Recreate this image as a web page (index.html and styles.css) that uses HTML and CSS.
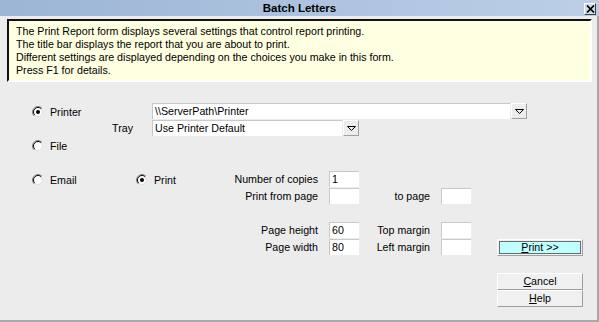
FILE: index.html
```html
<!DOCTYPE html>
<html>
<head>
<meta charset="utf-8">
<link rel="stylesheet" href="styles.css">
</head>
<body>
<div class="window">
  <div class="titlebar">
    <span></span>
    <span class="title">Batch Letters</span>
    <span class="close"><svg width="9" height="8" viewBox="0 0 9 8"><path d="M1 0.5 L8 7.5 M8 0.5 L1 7.5" stroke="#000" stroke-width="1.7" fill="none"/></svg></span>
  </div>
  <div class="content">
    <div class="info">
      <p>The Print Report form displays several settings that control report printing.</p>
      <p>The title bar displays the report that you are about to print.</p>
      <p>Different settings are displayed depending on the choices you make in this form.</p>
      <p>Press F1 for details.</p>
    </div>
    <div class="form">
      <div class="row row-a">
        <label class="radio cell-printer"><svg class="rb" width="12" height="12" viewBox="0 0 12 12"><circle cx="6" cy="6" r="5" fill="#fff"/><path d="M2.1 9.9 A5.5 5.5 0 0 1 9.9 2.1" stroke="#808080" fill="none"/><path d="M2.8 9.2 A4.5 4.5 0 0 1 9.2 2.8" stroke="#000" fill="none"/><path d="M9.2 2.8 A4.5 4.5 0 0 1 2.8 9.2" stroke="#dcdcdc" fill="none"/><circle cx="6" cy="6" r="2" fill="#000"/></svg>Printer</label>
        <div class="combo combo-printer"><span class="field">\\ServerPath\Printer</span><span class="drop"><svg width="9" height="6" viewBox="0 0 9 6"><path d="M0.5 0.5 H8.5 L4.5 4.5 Z" stroke="#000" fill="none"/></svg></span></div>
      </div>
      <div class="row row-b">
        <span class="lbl cell-tray">Tray</span>
        <div class="combo combo-tray"><span class="field">Use Printer Default</span><span class="drop"><svg width="9" height="6" viewBox="0 0 9 6"><path d="M0.5 0.5 H8.5 L4.5 4.5 Z" stroke="#000" fill="none"/></svg></span></div>
      </div>
      <div class="row row-c">
        <label class="radio"><svg class="rb" width="12" height="12" viewBox="0 0 12 12"><circle cx="6" cy="6" r="5" fill="#fff"/><path d="M2.1 9.9 A5.5 5.5 0 0 1 9.9 2.1" stroke="#808080" fill="none"/><path d="M2.8 9.2 A4.5 4.5 0 0 1 9.2 2.8" stroke="#000" fill="none"/><path d="M9.2 2.8 A4.5 4.5 0 0 1 2.8 9.2" stroke="#dcdcdc" fill="none"/></svg>File</label>
      </div>
      <div class="row row-d">
        <label class="radio cell-email"><svg class="rb" width="12" height="12" viewBox="0 0 12 12"><circle cx="6" cy="6" r="5" fill="#fff"/><path d="M2.1 9.9 A5.5 5.5 0 0 1 9.9 2.1" stroke="#808080" fill="none"/><path d="M2.8 9.2 A4.5 4.5 0 0 1 9.2 2.8" stroke="#000" fill="none"/><path d="M9.2 2.8 A4.5 4.5 0 0 1 2.8 9.2" stroke="#dcdcdc" fill="none"/></svg>Email</label>
        <label class="radio cell-print"><svg class="rb" width="12" height="12" viewBox="0 0 12 12"><circle cx="6" cy="6" r="5" fill="#fff"/><path d="M2.1 9.9 A5.5 5.5 0 0 1 9.9 2.1" stroke="#808080" fill="none"/><path d="M2.8 9.2 A4.5 4.5 0 0 1 9.2 2.8" stroke="#000" fill="none"/><path d="M9.2 2.8 A4.5 4.5 0 0 1 2.8 9.2" stroke="#dcdcdc" fill="none"/><circle cx="6" cy="6" r="2" fill="#000"/></svg>Print</label>
        <span class="lbl cell-label1">Number of copies</span>
        <span class="input">1</span>
      </div>
      <div class="row row-e">
        <span class="lbl cell-label1 indent">Print from page</span>
        <span class="input"></span>
        <span class="lbl cell-label2">to page</span>
        <span class="input"></span>
      </div>
      <div class="row row-f">
        <span class="lbl cell-label1 indent">Page height</span>
        <span class="input">60</span>
        <span class="lbl cell-label2">Top margin</span>
        <span class="input"></span>
      </div>
      <div class="row row-g">
        <span class="lbl cell-label1 indent">Page width</span>
        <span class="input">80</span>
        <span class="lbl cell-label2">Left margin</span>
        <span class="input"></span>
        <span class="btn btn-print"><span class="btn-inner"><u>P</u>rint &gt;&gt;</span></span>
      </div>
      <div class="row row-h">
        <span class="btn btn-side"><u>C</u>ancel</span>
      </div>
      <div class="row row-i">
        <span class="btn btn-side"><u>H</u>elp</span>
      </div>
    </div>
  </div>
</div>
</body>
</html>
```

FILE: styles.css
```css
* { box-sizing: border-box; }
html, body { margin: 0; padding: 0; }
body {
  width: 599px;
  height: 322px;
  overflow: hidden;
  font-family: "Liberation Sans", Arial, sans-serif;
  font-size: 8pt;
  color: #000;
  background: #ececec;
}
.window {
  width: 599px;
  height: 322px;
  display: flex;
  flex-direction: column;
}
.titlebar {
  height: 16px;
  flex: none;
  display: grid;
  grid-template-columns: 1fr auto 1fr;
  align-items: center;
  background: linear-gradient(to right, #9cb5d5, #bccfe7);
}
.title {
  font-weight: bold;
  font-size: 11.5px;
  line-height: 16px;
}
.close {
  justify-self: end;
  margin-right: 3px;
  margin-top: 2px;
  width: 12px;
  height: 12px;
  display: flex;
  align-items: center;
  justify-content: center;
  background: #d0dbe8;
  border: 1px solid;
  border-color: #fff #404040 #404040 #fff;
}
.close svg { display: block; }
.content {
  flex: 1;
  border-right: 2px solid #a8a8a8;
  border-bottom: 2px solid #a8a8a8;
  padding-top: 3px;
}
.info {
  margin: 0 5px 0 7px;
  height: 63px;
  background: #ffffe1;
  border: 2px solid;
  border-color: #111 #fff #fff #111;
  padding: 4px 0 0 7px;
}
.info p {
  margin: 0;
  line-height: 13px;
}
.form {
  padding-left: 32px;
  padding-top: 21px;
}
.row {
  display: flex;
  align-items: flex-start;
  height: 17px;
}
.radio {
  display: flex;
  align-items: center;
  height: 17px;
  gap: 6px;
}
.rb { display: block; flex: none; }
.lbl {
  height: 16px;
  line-height: 16px;
  text-align: right;
  white-space: nowrap;
}
.cell-printer { width: 120px; }
.cell-tray { width: 101px; margin-right: 19px; }
.cell-email { width: 104px; }
.cell-print { width: 64px; }
.cell-label1 { width: 118px; margin-right: 11px; }
.cell-label1.indent { margin-left: 168px; }
.cell-label2 { width: 71px; margin-right: 11px; }
.combo {
  display: flex;
  gap: 1px;
  height: 16px;
}
.field {
  display: block;
  height: 16px;
  line-height: 15px;
  background: #fff;
  border-top: 1px solid #c8c8c8;
  border-left: 1px solid #c8c8c8;
  padding-left: 2px;
  white-space: nowrap;
}
.combo-printer .field { width: 358px; }
.combo-tray .field { width: 190px; }
.drop {
  width: 16px;
  height: 16px;
  display: flex;
  align-items: center;
  justify-content: center;
  background: #ececec;
  border: 1px solid;
  border-color: #fff #a0a0a0 #a0a0a0 #fff;
  padding-top: 1px;
}
.drop svg { display: block; }
.row-c { height: 16px; margin-bottom: 18px; }
.row-c .radio { height: 17px; }
.row-e { margin-bottom: 17px; }
.row-g { margin-bottom: 17px; }
.input {
  display: block;
  width: 30px;
  height: 16px;
  line-height: 15px;
  background: #fff;
  border-top: 1px solid #c8c8c8;
  border-left: 1px solid #c8c8c8;
  padding-left: 2px;
}
.btn {
  display: flex;
  align-items: center;
  justify-content: center;
  width: 86px;
  height: 17px;
  background: #f0f0f0;
  border: 1px solid;
  border-color: #fff #a0a0a0 #a0a0a0 #fff;
  line-height: 13px;
}
.btn-print {
  margin-left: 26px;
  padding: 1px;
}
.btn-inner {
  display: flex;
  align-items: center;
  justify-content: center;
  width: 100%;
  height: 100%;
  background: #c0ffff;
  border: 1px solid #6a6a6a;
}
.btn-side { margin-left: 465px; }
.row-i { height: 17px; }
```
